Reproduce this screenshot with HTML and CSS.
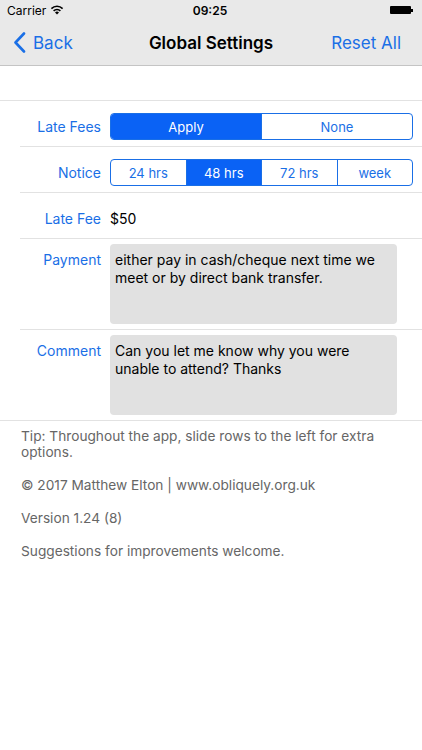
FILE: index.html
```html
<!DOCTYPE html>
<html lang="en">
<head>
    <meta charset="UTF-8">
    <meta name="viewport" content="width=device-width, initial-scale=1.0">
    <title>Global Settings</title>
    <link rel="stylesheet" href="styles.css">
</head>
<body>

<div class="statusbar">
    <div class="carrier">
        Carrier
        <svg class="wifi" width="14" height="10" viewBox="0 0 14 10">
            <path d="M7 9.6 L9 7.4 A3 3 0 0 0 5 7.4 Z" fill="#000"/>
            <path d="M3.6 5.9 A5 5 0 0 1 10.4 5.9" stroke="#000" stroke-width="1.6" fill="none"/>
            <path d="M1.4 3.6 A8 8 0 0 1 12.6 3.6" stroke="#000" stroke-width="1.6" fill="none"/>
        </svg>
    </div>
    <div class="clock">09:25</div>
    <div class="battery"><span class="battery-body"></span><span class="battery-tip"></span></div>
</div>

<header class="navbar">
    <a class="nav-back">
        <svg width="13" height="21" viewBox="0 0 13 21">
            <path d="M11 1.5 L2.5 10.5 L11 19.5" stroke="#1a6fe6" stroke-width="2.6" fill="none" stroke-linecap="round" stroke-linejoin="round"/>
        </svg>
        Back
    </a>
    <h1>Global Settings</h1>
    <a class="nav-action">Reset All</a>
</header>

<div class="gap"></div>

<div class="table">
    <div class="row">
        <div class="label">Late Fees</div>
        <div class="segments">
            <span class="seg on">Apply</span>
            <span class="seg">None</span>
        </div>
    </div>

    <div class="row">
        <div class="label">Notice</div>
        <div class="segments">
            <span class="seg">24 hrs</span>
            <span class="seg on">48 hrs</span>
            <span class="seg">72 hrs</span>
            <span class="seg">week</span>
        </div>
    </div>

    <div class="row">
        <div class="label">Late Fee</div>
        <div class="value">$50</div>
    </div>

    <div class="row tall">
        <div class="label">Payment</div>
        <div class="textbox">either pay in cash/cheque next time we meet or by direct bank transfer.</div>
    </div>

    <div class="row tall last">
        <div class="label">Comment</div>
        <div class="textbox">Can you let me know why you were unable to attend? Thanks</div>
    </div>
</div>

<div class="footer">
    <p>Tip: Throughout the app, slide rows to the left for extra options.</p>
    <p>&copy; 2017 Matthew Elton | www.obliquely.org.uk</p>
    <p>Version 1.24 (8)</p>
    <p>Suggestions for improvements welcome.</p>
</div>

</body>
</html>
```

FILE: styles.css
```css
body {
    font-family: Inter, "Liberation Sans", sans-serif;
    margin: 0;
    padding: 0;
    background-color: #fff;
    color: #000;
}

.statusbar {
    height: 20px;
    background-color: #e9e9e9;
    display: flex;
    align-items: center;
    justify-content: space-between;
    padding: 0 9px 0 7px;
    font-size: 12px;
}

.carrier {
    flex: 1;
    display: flex;
    align-items: center;
    gap: 4px;
}

.clock {
    font-weight: 600;
}

.battery {
    flex: 1;
    display: flex;
    justify-content: flex-end;
    align-items: center;
}

.battery-body {
    width: 21px;
    height: 8px;
    background-color: #000;
    border-radius: 1px;
}

.battery-tip {
    width: 2px;
    height: 3px;
    background-color: #000;
}

.navbar {
    height: 45px;
    background-color: #e9e9e9;
    border-bottom: 1px solid #c4c4c4;
    display: flex;
    align-items: center;
    justify-content: space-between;
    padding: 0 21px 0 13px;
    position: relative;
}

.navbar h1 {
    position: absolute;
    left: 0;
    right: 0;
    text-align: center;
    margin: 0;
    font-size: 17px;
    font-weight: 600;
    pointer-events: none;
}

.nav-back, .nav-action {
    color: #1a6fe6;
    font-size: 17px;
    display: flex;
    align-items: center;
    gap: 7px;
}

.gap {
    height: 34px;
}

.table {
    border-top: 1px solid #e2e2e2;
    border-bottom: 1px solid #e2e2e2;
}

.row {
    margin-left: 20px;
    height: 46px;
    box-sizing: border-box;
    padding-top: 6px;
    padding-right: 9px;
    border-bottom: 1px solid #e2e2e2;
    display: flex;
    align-items: center;
    gap: 9px;
}

.row.tall {
    height: auto;
    align-items: flex-start;
    padding-top: 5px;
    padding-bottom: 5px;
}

.row.last {
    border-bottom: none;
}

.label {
    width: 81px;
    text-align: right;
    color: #1a6fe6;
    font-size: 14px;
    line-height: 18px;
    flex-shrink: 0;
}

.row.tall .label {
    padding-top: 7px;
}

.segments {
    flex: 1;
    display: flex;
    height: 25px;
    border: 1px solid #1a6fe6;
    border-radius: 4px;
    overflow: hidden;
}

.seg {
    flex: 1;
    display: flex;
    align-items: center;
    justify-content: center;
    font-size: 13px;
    color: #1a6fe6;
    border-left: 1px solid #1a6fe6;
}

.seg:first-child {
    border-left: none;
}

.seg.on {
    background-color: #0a62f5;
    color: #fff;
}

.value {
    font-size: 14px;
}

.textbox {
    width: 277px;
    height: 73px;
    background-color: #e1e1e1;
    border-radius: 4px;
    padding: 7px 5px 0 5px;
    font-size: 14px;
    line-height: 18px;
}

.footer {
    padding: 7px 20px 0 21px;
    color: #666;
    font-size: 13.7px;
    line-height: 16.4px;
}

.footer p {
    margin: 0 0 16.4px 0;
}
```
